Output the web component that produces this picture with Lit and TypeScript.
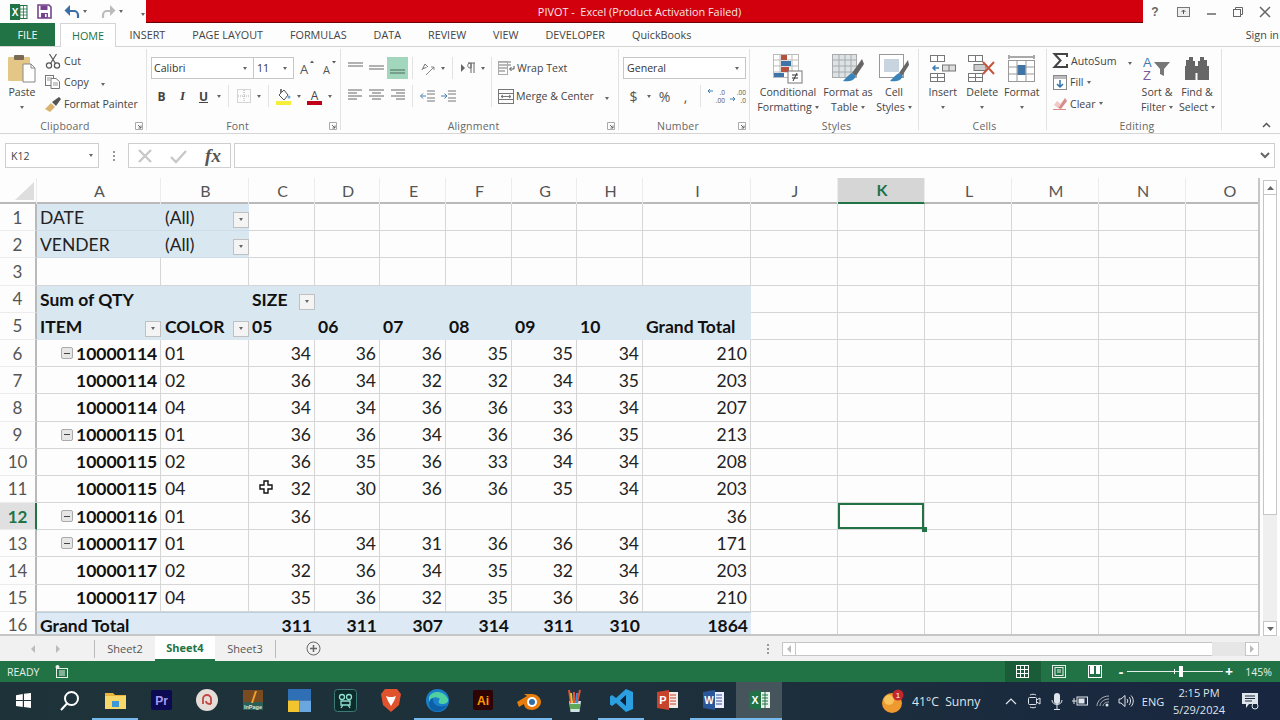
import { LitElement, html, svg, css, nothing } from "lit";
import { customElement } from "lit/decorators.js";

const caret = html`<span class="caret"></span>`;
const launcher = html`<svg class="launch" width="8" height="8" viewBox="0 0 8 8"><path d="M.5 7.5V.5h7v7z" fill="none" stroke="#aaa"/><path d="M3 3l3 3M6 3.5V6H3.5" fill="none" stroke="#666"/></svg>`;
const lines = (rows: number[][], color = "#666") => html`<svg width="17" height="16" viewBox="0 0 17 16">${rows.map(([x1, x2, y]) => svg`<path d="M${x1} ${y}H${x2}" stroke=${color} fill="none"/>`)}</svg>`;

const icons = {
  excelSmall: html`<svg width="18" height="16" viewBox="0 0 18 16"><rect x="6" y="1.5" width="11" height="13" fill="#fff" stroke="#217346"/><path d="M10 2v12M13.5 2v12M7 5h10M7 8h10M7 11h10" stroke="#217346" stroke-width=".8"/><rect x="0" y="0" width="10" height="16" fill="#217346"/><text x="5" y="12" font-size="10" font-weight="700" fill="#fff" text-anchor="middle" font-family="Liberation Sans">X</text></svg>`,
  save: html`<svg width="15" height="15" viewBox="0 0 15 15"><path d="M1 1h11l2 2v11H1z" fill="#fff" stroke="#76448f" stroke-width="1.6"/><rect x="3.5" y="1.5" width="7" height="4.5" fill="#76448f"/><rect x="4" y="9" width="7" height="5" fill="#76448f"/><rect x="8" y="10" width="1.6" height="3" fill="#fff"/></svg>`,
  undo: html`<svg width="16" height="14" viewBox="0 0 16 14"><path d="M5 6h5a4 4 0 0 1 4 4v3" fill="none" stroke="#3c6ea5" stroke-width="2.2"/><path d="M6 0L.5 5.5 6 11z" fill="#3c6ea5"/></svg>`,
  redo: html`<svg width="16" height="14" viewBox="0 0 16 14"><path d="M11 6H7a4 4 0 0 0-4 4v3" fill="none" stroke="#bbb" stroke-width="2.2"/><path d="M10 0l5.500 5.500L10 11z" fill="#bbb"/></svg>`,
  cut: html`<svg width="16" height="16" viewBox="0 0 16 16" fill="none" stroke="#555" stroke-width="1.2"><circle cx="4" cy="12.500" r="2.600"/><circle cx="12" cy="12.500" r="2.600"/><path d="M5.500 10.500L11.500 1M10.500 10.500L4.500 1"/></svg>`,
  copy: html`<svg width="16" height="14" viewBox="0 0 16 14" fill="#fff" stroke="#777"><rect x=".5" y=".5" width="8" height="10"/><path d="M6 3.500h5l3.500 3v7H6z"/><path d="M2 3h5M2 5h3M8 8h5M8 10h5" stroke="#999"/></svg>`,
  painter: html`<svg width="18" height="16" viewBox="0 0 18 16"><path d="M1 13l6-6 4 4-5 5z" fill="#d9b26b"/><path d="M8 6l4 4 5-7-2-2z" fill="#555"/></svg>`,
  paste: html`<svg width="28" height="30" viewBox="0 0 28 30"><rect x="0" y="3" width="22" height="24" rx="1" fill="#e4c787"/><rect x="6" y="1" width="10" height="5" rx="1" fill="#7a6a55"/><path d="M15 10h8l4 4v14H15z" fill="#fff" stroke="#888"/><path d="M23 10v4h4" fill="none" stroke="#888"/></svg>`,
  grow: html`<svg width="16" height="18" viewBox="0 0 16 18"><text x="0" y="15" font-size="13" fill="#555" font-family="Open Sans">A</text><path d="M10 4l2-2.500L14 4z" fill="#555"/></svg>`,
  shrink: html`<svg width="16" height="18" viewBox="0 0 16 18"><text x="1" y="15" font-size="11" fill="#555" font-family="Open Sans">A</text><path d="M10 2l2 2.500L14 2z" fill="#555"/></svg>`,
  borders: html`<svg width="14" height="14" viewBox="0 0 14 14" fill="none" stroke="#aaa" stroke-dasharray="1 1"><rect x=".5" y=".5" width="13" height="13"/><path d="M7 1v12M1 7h12"/></svg>`,
  fill: html`<svg width="15" height="17" viewBox="0 0 15 17"><path d="M3 7l5-5 4 5-4 5z" fill="#fff" stroke="#555"/><path d="M4 1h2v4H4z" fill="#777"/><circle cx="13" cy="9" r="1.500" fill="#6aa9d8"/><rect y="13" width="15" height="4" fill="#f5ee3d"/></svg>`,
  fontColor: html`<svg width="15" height="18" viewBox="0 0 15 18"><text x="7.500" y="12.500" font-size="12" text-anchor="middle" fill="#444" font-family="Open Sans">A</text><rect y="14" width="15" height="4" fill="#c00018"/></svg>`,
  orient: html`<svg width="15" height="15" viewBox="0 0 15 15" fill="none" stroke="#666"><path d="M2 9l3-6 3 3M3 7.500l3.500-1" stroke-width=".9"/><path d="M6 14L14 6" stroke="#888"/><path d="M11 6h3v3" stroke="#888"/></svg>`,
  rtl: html`<svg width="16" height="12" viewBox="0 0 16 12"><path d="M1 2l4 4-4 4z" fill="#666"/><path d="M8 1h7M10 1c-3 0-3 5 0 5h1V1M11 1v10M14 1v10" fill="none" stroke="#666"/></svg>`,
  outdent: html`<svg width="16" height="12" viewBox="0 0 16 12" fill="none"><path d="M7 1h8M7 4h8M7 8h8M7 11h8" stroke="#777"/><path d="M6 6H1M3 3.500L.5 6 3 8.500" stroke="#3e7cb1"/></svg>`,
  indent: html`<svg width="16" height="12" viewBox="0 0 16 12" fill="none"><path d="M7 1h8M7 4h8M7 8h8M7 11h8" stroke="#777"/><path d="M0 6h5M3.500 3.500L6 6 3.500 8.500" stroke="#3e7cb1"/></svg>`,
  wrap: html`<svg width="17" height="14" viewBox="0 0 17 14" fill="none" stroke="#777"><path d="M1 1h12M1 4h12M1 7h9M1 10h6"/><rect x=".5" y=".5" width="9" height="13" stroke="#aaa"/><path d="M16 5v3h-4M13.500 6l-2 2 2 2" stroke="#555"/></svg>`,
  merge: html`<svg width="16" height="15" viewBox="0 0 16 15" fill="none" stroke="#777"><rect x=".5" y=".5" width="15" height="14"/><path d="M1 4.500h14M1 10.500h14M3 7.500h10M5 6L3 7.500 5 9M11 6l2 1.500L11 9"/></svg>`,
  decInc: html`<svg width="18" height="16" viewBox="0 0 18 16"><text x="18" y="7" font-size="6.500" text-anchor="end" fill="#555" font-family="Open Sans">.0</text><text x="18" y="14.500" font-size="6.500" text-anchor="end" fill="#555" font-family="Open Sans">.00</text><path d="M6 3H1M3 1L1 3l2 2" stroke="#3e7cb1" fill="none"/></svg>`,
  decDec: html`<svg width="18" height="16" viewBox="0 0 18 16"><text x="18" y="7" font-size="6.500" text-anchor="end" fill="#555" font-family="Open Sans">.00</text><text x="18" y="14.500" font-size="6.500" text-anchor="end" fill="#555" font-family="Open Sans">.0</text><path d="M2 11h5M5 9l2 2-2 2" stroke="#3e7cb1" fill="none"/></svg>`,
  conditional: html`<svg width="30" height="30" viewBox="0 0 30 30"><g fill="#fff" stroke="#bbb"><rect x=".5" y=".5" width="25" height="23"/></g><path d="M7 1v22M19 1v22M1 6h24M1 12h24M1 18h24" stroke="#bbb" fill="none"/><rect x="8" y="1" width="6" height="5" fill="#b5513c"/><rect x="8" y="7" width="10" height="5" fill="#3f74a8"/><rect x="8" y="13" width="8" height="5" fill="#b5513c"/><rect x="1" y="19" width="10" height="4" fill="#3f74a8"/><rect x="15" y="17" width="14" height="12" fill="#fff" stroke="#777"/><path d="M19 21h6M19 24h6M24 19l-4 8" stroke="#333" fill="none"/></svg>`,
  table: html`<svg width="32" height="30" viewBox="0 0 32 30"><rect x=".5" y=".5" width="24" height="23" fill="#dbe3e6" stroke="#aaa"/><path d="M7 1v22M13 1v22M19 1v22M1 6h24M1 12h24M1 18h24" stroke="#aaa" fill="none"/><path d="M30 5l-10 14 4 3 8-12z" fill="#666"/><path d="M20 19c-4 2-6 5-9 8 5 1 11 0 13-5z" fill="#3b82b8"/></svg>`,
  cell: html`<svg width="30" height="30" viewBox="0 0 30 30"><rect x=".5" y=".5" width="24" height="23" fill="#fff" stroke="#999"/><rect x="5" y="5" width="15" height="13" fill="#c8d4e0"/><path d="M29 6l-9 13 3 3 7-11z" fill="#666"/><path d="M20 19c-4 2-6 5-9 8 5 1 11 0 13-5z" fill="#3b82b8"/></svg>`,
  insert: html`<svg width="26" height="27" viewBox="0 0 26 27" fill="#fff" stroke="#777"><rect x=".5" y=".5" width="14" height="6"/><path d="M7.500 1v5"/><rect x="12.500" y="10" width="13" height="6" fill="#ddd"/><path d="M19 10v6"/><rect x=".5" y="18.500" width="14" height="8"/><path d="M7.500 19v7M1 22.500h13"/><path d="M9 13H3M5.500 10.500L3 13l2.500 2.500" stroke="#3e7cb1" stroke-width="1.500" fill="none"/></svg>`,
  del: html`<svg width="28" height="27" viewBox="0 0 28 27" fill="#fff" stroke="#777"><rect x=".5" y=".5" width="14" height="6"/><path d="M7.500 1v5"/><rect x="6" y="9.500" width="12" height="6" fill="#ccc"/><rect x=".5" y="18.500" width="14" height="8"/><path d="M7.500 19v7M1 22.500h13"/><path d="M15 7l11 12M26 7L15 19" stroke="#c8553d" stroke-width="2" fill="none"/></svg>`,
  format: html`<svg width="28" height="30" viewBox="0 0 28 30" fill="none" stroke="#999"><path d="M1 1v4M26 1v4M2 3h23" stroke="#555"/><rect x=".5" y="6.500" width="26" height="21" fill="#fff"/><path d="M9 7v20M18 7v20M1 13h25M1 20h25"/><rect x="9.500" y="11" width="8" height="10" fill="#3f74a8" stroke="none"/></svg>`,
  sigma: html`<svg width="15" height="15" viewBox="0 0 15 15"><path d="M14 4V1H1.500l6 6.500L1.500 14H14v-3" fill="none" stroke="#444" stroke-width="2"/></svg>`,
  fillDown: html`<svg width="14" height="15" viewBox="0 0 14 15"><rect x=".5" y=".5" width="13" height="14" fill="#fff" stroke="#888"/><rect x="1" y="1" width="12" height="3" fill="#bbb"/><path d="M7 5v7M4 9l3 3 3-3" fill="none" stroke="#2f72a8" stroke-width="1.500"/></svg>`,
  eraser: html`<svg width="14" height="13" viewBox="0 0 14 13"><path d="M5 11L12 1l2 3-6 8z" fill="#d98c8c"/><path d="M5 11L1 8l3-4 4 3z" fill="#f0c8c8"/><path d="M0 12.500h13" stroke="#d98c8c"/></svg>`,
  sort: html`<svg width="28" height="28" viewBox="0 0 28 28"><text x="0" y="12" font-size="13" fill="#3e7cb1" font-family="Liberation Sans">A</text><text x="0" y="25" font-size="13" fill="#7a5a9a" font-family="Liberation Sans">Z</text><path d="M11 7h16l-6 7v7l-4-2v-5z" fill="#777"/></svg>`,
  find: html`<svg width="26" height="25" viewBox="0 0 26 25" fill="#666"><path d="M5 1h4v4h2v5H2V4h3zM16 1h4v3h3v6h-9V5h2z"/><path d="M1 10h10.500v14H1zM13.500 10H25v14H13.500zM11 10h3v7h-3z"/></svg>`,
  cursor: html`<svg class="cursor" width="14" height="14" viewBox="0 0 14 14"><path d="M5 1h4v4h4v4H9v4H5V9H1V5h4z" fill="#fff" stroke="#111" stroke-width="1.400"/></svg>`,
  grid: html`<svg width="14" height="14" viewBox="0 0 14 14" fill="none" stroke="#fff"><rect x=".5" y=".5" width="12" height="12"/><path d="M4.500 1v11M8.500 1v11M1 4.500h11M1 8.500h11"/></svg>`,
  page: html`<svg width="14" height="14" viewBox="0 0 14 14" fill="none" stroke="#e6efe9"><rect x=".5" y=".5" width="13" height="12"/><rect x="3" y="2.500" width="8" height="8"/><path d="M5 5h4M5 7h4"/></svg>`,
  breakView: html`<svg width="14" height="14" viewBox="0 0 14 14"><rect x=".5" y=".5" width="13" height="12" fill="none" stroke="#fff"/><rect x="2" y="1" width="4" height="8" fill="#fff"/><rect x="8" y="1" width="4" height="8" fill="#fff"/></svg>`,
  macro: html`<svg width="13" height="13" viewBox="0 0 13 13" fill="none" stroke="#e6efe9"><rect x="1.500" y="3.500" width="11" height="9"/><path d="M4 6h6M4 8h6M4 10h6"/><circle cx="2.500" cy="2" r="2" fill="#e6efe9" stroke="none"/></svg>`,
};

const taskIcons = [
  html`<svg width="15" height="15" viewBox="0 0 15 15" fill="#fff"><path d="M0 2.200L6.800 1v6H0zM8 .8L15 0v7H8zM0 8h6.800v6L0 13zM8 8h7v7l-7-1z"/></svg>`,
  html`<svg width="21" height="21" viewBox="0 0 21 21" fill="none" stroke="#fff" stroke-width="2"><circle cx="12.500" cy="8.500" r="6.500"/><path d="M8 13.500L2 20"/></svg>`,
  html`<svg width="21" height="18" viewBox="0 0 21 18"><path d="M0 2h8l2 2h11v14H0z" fill="#e8b53a"/><rect y="5" width="21" height="13" fill="#f6d769"/><rect x="7" y="10" width="7" height="6" fill="#3b9ad6"/></svg>`,
  html`<svg width="21" height="20" viewBox="0 0 21 20"><rect width="21" height="20" rx="2" fill="#0b0a52"/><text x="10.500" y="14.500" font-size="12" font-weight="700" text-anchor="middle" fill="#a89bf5" font-family="Liberation Sans">Pr</text></svg>`,
  html`<svg width="22" height="22" viewBox="0 0 22 22"><circle cx="11" cy="11" r="11" fill="#e5ddd8"/><path d="M7 15V10a4 4 0 0 1 8 0v5M15 15c-3 0-5-1-5-3" fill="none" stroke="#c2473f" stroke-width="1.800"/></svg>`,
  html`<svg width="20" height="20" viewBox="0 0 20 20"><rect width="20" height="20" fill="#7a4a20"/><rect y="12" width="20" height="8" fill="#2c5f58"/><path d="M12 1L8 13h2l4-12z" fill="#f0a12c"/><text x="10" y="18.500" font-size="5.500" font-weight="700" text-anchor="middle" fill="#d6e8dc" font-family="Liberation Sans">InPage</text></svg>`,
  html`<svg width="23" height="23" viewBox="0 0 23 23"><rect width="23" height="11.500" fill="#2f6fb5"/><rect y="11.500" width="11.500" height="11.500" fill="#f2c530"/><rect x="11.500" y="11.500" width="11.500" height="11.500" fill="#6aa6df"/></svg>`,
  html`<svg width="23" height="23" viewBox="0 0 23 23"><rect x=".5" y=".5" width="22" height="22" rx="3" fill="#0d2b2b" stroke="#3d7a78"/><g fill="none" stroke="#8fe0d0" stroke-width="1.300"><circle cx="8" cy="8" r="2.500"/><circle cx="15" cy="8" r="2.500"/><path d="M7 12h9v4H7zM9 16l-2 3M14 16l2 3"/></g></svg>`,
  html`<svg width="20" height="23" viewBox="0 0 20 23"><path d="M4 0h12l4 5-2 11-8 7-8-7L0 5z" fill="#e0532c"/><path d="M5 7l3 1h4l3-1-2 5-3 5-3-5z" fill="#fff"/></svg>`,
  html`<svg width="23" height="23" viewBox="0 0 23 23"><circle cx="11.500" cy="11.500" r="11.500" fill="#1a7fc9"/><path d="M3 8c3-7 15-7 19 2 1 4-3 5-6 5-4 0-4-3-2-5C10 7 5 8 3 14z" fill="#4fd0a0"/><path d="M6 21c-5-5-3-11 1-12-1 6 5 11 14 7-3 6-10 8-15 5z" fill="#0d5fa8"/></svg>`,
  html`<svg width="20" height="20" viewBox="0 0 20 20"><rect width="20" height="20" rx="2" fill="#2e0303"/><text x="10" y="14.500" font-size="12" font-weight="700" text-anchor="middle" fill="#ff9a00" font-family="Liberation Sans">Ai</text></svg>`,
  html`<svg width="24" height="19" viewBox="0 0 24 19"><path d="M0 11l10-6-3-2h8c5 0 9 4 9 8s-4 8-9 8-8-3-8-6l-5 3z" fill="#e87d0d"/><circle cx="15" cy="11" r="5" fill="#fff"/><circle cx="15" cy="11" r="3" fill="#2f6ea8"/></svg>`,
  html`<svg width="16" height="23" viewBox="0 0 16 23"><path d="M2 12h12l-1.500 11h-9z" fill="#cfe3e4"/><path d="M4 14L2 1M7 14L7 3M10 14l3-13" fill="none" stroke="#e0503c" stroke-width="2"/><path d="M5 14L4 4" stroke="#efc02c" stroke-width="2"/><path d="M9 14l1-10" stroke="#3c8fd6" stroke-width="2"/><rect x="3" y="15" width="10" height="5" fill="#5ea85a"/></svg>`,
  html`<svg width="23" height="23" viewBox="0 0 23 23"><path d="M16 0l7 3v17l-7 3-10-9-4 3-2-1.500v-8L2 6l4 3z" fill="#2c9fe0"/><path d="M16 6l-6 5.500 6 5.500z" fill="#0d2233"/></svg>`,
  html`<svg width="21" height="20" viewBox="0 0 21 20"><rect x="10" y="2" width="11" height="16" fill="#f4e9e4"/><path d="M13 5h6M13 8h6M13 11h6M13 14h6" stroke="#c8432b"/><path d="M0 2l12-2v20L0 18z" fill="#c8432b"/><text x="6" y="14" font-size="11" font-weight="700" text-anchor="middle" fill="#fff" font-family="Liberation Sans">P</text></svg>`,
  html`<svg width="21" height="20" viewBox="0 0 21 20"><rect x="10" y="2" width="11" height="16" fill="#eef"/><path d="M13 5h6M13 8h6M13 11h6M13 14h6" stroke="#2b579a"/><path d="M0 2l12-2v20L0 18z" fill="#2b579a"/><text x="6" y="14" font-size="10" font-weight="700" text-anchor="middle" fill="#fff" font-family="Liberation Sans">W</text></svg>`,
  html`<svg width="21" height="20" viewBox="0 0 21 20"><rect x="10" y="2" width="11" height="16" fill="#e8f2ea"/><path d="M13 5h6M13 8h6M13 11h6M13 14h6M16 2v16" stroke="#217346"/><path d="M0 2l12-2v20L0 18z" fill="#217346"/><text x="6" y="14" font-size="10.500" font-weight="700" text-anchor="middle" fill="#fff" font-family="Liberation Sans">X</text></svg>`,
];
// which taskbar slots have the running underline
const running = [2, 9, 10, 11, 13, 15, 16];

const letters = "ABCDEFGHIJKLMNO".split("");
type Cell = { t?: string; cls?: string; filter?: boolean; minus?: boolean };

const pivot: [string, string, boolean, (number | null)[], number][] = [
  ["10000114", "01", true, [34, 36, 36, 35, 35, 34], 210],
  ["10000114", "02", false, [36, 34, 32, 32, 34, 35], 203],
  ["10000114", "04", false, [34, 34, 36, 36, 33, 34], 207],
  ["10000115", "01", true, [36, 36, 34, 36, 36, 35], 213],
  ["10000115", "02", false, [36, 35, 36, 33, 34, 34], 208],
  ["10000115", "04", false, [32, 30, 36, 36, 35, 34], 203],
  ["10000116", "01", true, [36, null, null, null, null, null], 36],
  ["10000117", "01", true, [null, 34, 31, 36, 36, 34], 171],
  ["10000117", "02", false, [32, 36, 34, 35, 32, 34], 203],
  ["10000117", "04", false, [35, 36, 32, 35, 36, 36], 210],
];

function buildRows(): Cell[][] {
  const blank = () => letters.map(() => ({} as Cell));
  const rows: Cell[][] = [];
  for (const label of ["DATE", "VENDER"]) {
    const r = blank();
    r[0] = { t: label, cls: "page" };
    r[1] = { t: "(All)", cls: "page wide", filter: true };
    rows.push(r);
  }
  rows.push(blank());
  const r4 = blank();
  for (let i = 0; i < 9; i++) r4[i] = { cls: "head" };
  r4[0] = { t: "Sum of QTY", cls: "head" };
  r4[2] = { t: "SIZE", cls: "head", filter: true };
  rows.push(r4);
  const r5 = blank();
  for (let i = 0; i < 9; i++) r5[i] = { cls: "head" };
  r5[0] = { t: "ITEM", cls: "head", filter: true };
  r5[1] = { t: "COLOR", cls: "head wide", filter: true };
  ["05", "06", "07", "08", "09", "10"].forEach((t, i) => (r5[i + 2] = { t, cls: "head" }));
  r5[8] = { t: "Grand Total", cls: "head" };
  rows.push(r5);
  for (const [item, color, minus, nums, total] of pivot) {
    const r = blank();
    r[0] = { t: item, cls: "item", minus };
    r[1] = { t: color, cls: "wide" };
    nums.forEach((n, i) => (r[i + 2] = { t: n === null ? "" : String(n), cls: "num" }));
    r[8] = { t: String(total), cls: "num" };
    rows.push(r);
  }
  rows[11][10] = { cls: "sel" };
  const tot = blank();
  for (let i = 0; i < 9; i++) tot[i] = { cls: "total" };
  tot[0] = { t: "Grand Total", cls: "total" };
  [311, 311, 307, 314, 311, 310].forEach((n, i) => (tot[i + 2] = { t: String(n), cls: "total num" }));
  tot[8] = { t: "1864", cls: "total num" };
  rows.push(tot);
  return rows;
}

@customElement("app-root")
export class AppRoot extends LitElement {
  static styles = css`
    :host {
      display: block;
      width: 1280px;
      height: 720px;
      overflow: hidden;
      background: #fdfdfd;
      font-family: "Open Sans", "Noto Sans", sans-serif;
      font-size: 10.6px;
      color: #444;
    }
    * { box-sizing: border-box; }
    svg { display: block; flex: none; overflow: visible; }
    .caret {
      display: inline-block;
      flex: none;
      width: 0;
      height: 0;
      border: 2.5px solid transparent;
      border-top: 3px solid #666;
      border-bottom: 0;
    }

    .titlebar { height: 23px; display: flex; }
    .qat { width: 146px; display: flex; align-items: center; padding-left: 10px; flex: none; }
    .qat .save { margin-left: 9px; }
    .qat .undo { margin-left: 12px; }
    .qat .caret { margin: 0 0 0 3px; }
    .qat .redo { margin-left: 13px; }
    .qat .more { margin-left: 15px; }
    .redline {
      width: 997px;
      height: 23px;
      background: #d2000c;
      border-bottom: 1px solid #6d0006;
      color: #f6e8e8;
      font-size: 10.9px;
      display: flex;
      align-items: center;
      justify-content: center;
      white-space: pre;
      padding-right: 10px;
    }
    .winbtns { flex: 1; display: flex; align-items: center; padding-left: 7px; gap: 17px; }

    .tabs { height: 24px; display: flex; align-items: stretch; border-bottom: 1px solid #d4d4d4; font-size: 10.8px; }
    .file { width: 55px; background: #217346; color: #f1f7f3; display: flex; align-items: center; justify-content: center; margin-right: 5px; }
    .tab { padding: 0 13.5px; display: flex; align-items: center; white-space: nowrap; }
    .tab.on { color: #217346; background: #fff; border: 1px solid #d4d4d4; border-bottom: 0; padding: 0 11px; height: 24px; }
    .signin { margin-left: auto; display: flex; align-items: center; padding-right: 1px; white-space: nowrap; }

    .ribbon { height: 87px; display: flex; border-bottom: 1px solid #d6d6d6; padding-top: 2px; }
    .group { display: flex; flex-direction: column; flex: none; border-right: 1px solid #e2e2e2; margin-bottom: 3px; }
    .gbody { flex: 1; display: flex; min-height: 0; }
    .glabel { height: 8px; display: flex; align-items: center; font-size: 10.5px; color: #666; }
    .glabel span { flex: 1; text-align: center; letter-spacing: .2px; }
    .launch { margin-right: 3px; margin-left: 5px; }
    .g-clip { width: 147px; }
    .g-font { width: 194px; padding-left: 4px; }
    .g-align { width: 278px; padding-left: 4px; }
    .g-num { width: 131px; padding-left: 4px; }
    .g-styles { width: 169px; padding-left: 5px; }
    .g-cells { width: 128px; padding-left: 4px; }
    .g-edit { width: 175px; padding-left: 6px; }
    .collapse { flex: 1; display: flex; justify-content: flex-end; align-items: flex-end; padding: 0 9px 5px 0; }

    .stack { display: flex; flex-direction: column; padding-top: 8px; gap: 6px; }
    .row { display: flex; align-items: center; height: 22px; flex: none; }
    .t { width: 21px; height: 22px; display: flex; align-items: center; justify-content: center; flex: none; }
    .t.active { background: #a2d6bd; }
    .c { width: 10px; display: flex; justify-content: center; flex: none; }
    .s { width: 1px; height: 22px; background: #e2e2e2; margin: 0 4px; flex: none; }
    .s.tall { height: 50px; margin: 8px 0 0; }
    .bold { font-weight: 700; font-size: 12px; }
    .ital { font-style: italic; font-family: "Liberation Serif", serif; font-size: 13px; font-weight: 700; }
    .und { text-decoration: underline; font-weight: 700; font-size: 12px; }
    .dd { height: 22px; border: 1px solid #c6c6c6; display: flex; align-items: center; padding: 0 6px 0 2px; justify-content: space-between; background: #fff; color: #333; flex: none; }
    .dd-font { width: 103px; }
    .dd-size { width: 40px; border-left: 0; padding-left: 3px; }
    .dd-num { width: 123px; padding-left: 3px; }
    .grow { margin-left: 6px; display: flex; gap: 6px; }

    .big { display: flex; flex-direction: column; align-items: center; flex: none; padding-top: 3px; text-align: center; line-height: 15px; }
    .bigicon { height: 33px; display: flex; align-items: center; justify-content: center; }
    .bigtxt { white-space: nowrap; height: 15px; display: flex; align-items: center; gap: 3px; }
    .w-paste { width: 44px; }
    .w-cf { width: 66px; }
    .w-ft { width: 54px; }
    .w-cs { width: 38px; }
    .w-c { width: 39.5px; }
    .w-s { width: 40px; }
    .w-list { width: 84px; }
    .clip { padding-top: 1px; display: flex; flex-direction: column; }
    .li { height: 21.5px; display: flex; align-items: center; gap: 3px; white-space: nowrap; }
    .li .ic { width: 17px; display: flex; justify-content: center; flex: none; }
    .lcaret { margin-left: 9px; }
    .icon-col { display: flex; align-items: center; gap: 2px; white-space: nowrap; padding-left: 6px; }
    .left-block { width: 146px; }
    .numtxt { font-size: 14px; color: #555; }

    .formula { height: 44px; padding: 9px 5px 10px; display: flex; align-items: stretch; }
    .fbox { border: 1px solid #cfcfcf; background: #fff; display: flex; align-items: center; flex: none; }
    .name { width: 94px; padding: 0 5px; justify-content: space-between; color: #444; }
    .dots { width: 29px; display: flex; flex-direction: column; align-items: center; justify-content: center; gap: 2px; flex: none; }
    .dots i { width: 2px; height: 2px; background: #999; }
    .fx { width: 103px; justify-content: space-around; }
    .input { flex: 1; margin-left: 3px; justify-content: flex-end; padding-right: 4px; }
    .fxt { font-family: "Liberation Serif", serif; font-style: italic; font-size: 19px; font-weight: 700; color: #555; line-height: 1; }

    .sheet { height: 458px; display: flex; position: relative; font-family: Lato, "Open Sans", sans-serif; font-size: 17.5px; color: #222; }
    .gridwrap { width: 1260px; height: 458px; overflow: hidden; border-bottom: 2px solid #c6c6c6; border-right: 2px solid #c6c6c6; flex: none; }
    .cols, .line {
      display: grid;
      grid-template-columns: 37px 124px 88px 66px 65px 66px 66px 65px 66px 108px 87px 87px 87px 87px 87px 87px;
    }
    .cols { height: 26px; border-bottom: 2px solid #b9b9b9; }
    .hc { display: flex; align-items: center; justify-content: center; border-right: 1px solid #ececec; font-size: 16px; color: #555; font-weight: 400; padding: 0 0 2px 2px; }
    .hc.corner { padding: 4px 3px 4px 15px; align-items: stretch; }
    .hc.on { background: #d6d6d6; color: #217346; font-weight: 700; border-bottom: 2px solid #217346; height: 26px; }
    .line { height: 27.2px; }
    .rh { display: flex; align-items: center; justify-content: center; color: #555; font-size: 17px; border-right: 2px solid #b9b9b9; border-bottom: 1px solid #ececec; }
    .rh.on { background: #e0e0e0; color: #217346; font-weight: 700; border-right-color: #217346; }
    .cell { display: flex; align-items: center; border-right: 1px solid #d6d6d6; border-bottom: 1px solid #d6d6d6; padding: 0 3px 0 3px; white-space: nowrap; min-width: 0; }
    .cell.page { background: #d9e7f1; border-right: 0; border-bottom-color: #cfdde8; color: #222; }
    .cell.wide { padding-left: 4px; }
    .cell.head { background: #d9e7f1; border-right: 0; border-bottom: 0; font-weight: 700; color: #111; }
    .cell.item { font-weight: 700; color: #111; padding-left: 24px; }
    .cell.num { justify-content: flex-end; }
    .cell.total { background: #dde9f4; border-right: 0; border-bottom: 0; border-top: 1px solid #b9cfe0; font-weight: 700; color: #111; }
    .sel { box-shadow: inset 0 0 0 2px #217346; position: relative; }
    .sel::after { content: ""; position: absolute; right: -3px; bottom: -3px; width: 5px; height: 5px; background: #217346; z-index: 2; }
    .minus { width: 12px; height: 12px; margin-right: 3px; border: 1px solid #aaa; border-radius: 2px; background: #e6e6e6; display: flex; align-items: center; justify-content: center; flex: none; }
    .minus i { width: 6px; height: 1px; background: #444; }
    .spacer { width: 12px; margin-right: 3px; flex: none; }
    .filter { margin-left: auto; margin-right: -3px; margin-top: 5px; width: 16px; height: 16px; background: #f4f4f4; border: 1px solid #c0c0c0; display: flex; align-items: center; justify-content: center; flex: none; }
    .cursor { position: absolute; left: 259px; top: 302px; }

    .vbar { flex: 1; padding: 2px 3px 0 3px; display: flex; flex-direction: column; }
    .sb { height: 15px; border: 1px solid #c6c6c6; background: #fff; display: flex; align-items: center; justify-content: center; flex: none; }
    .vthumb { height: 320px; border: 1px solid #c6c6c6; border-top: 0; background: #fff; flex: none; }
    .vtrack { flex: 1; background: #efefef; }

    .tabsbar { height: 25px; display: flex; align-items: center; background: #f1f1f1; color: #555; font-size: 11px; }
    .nav { width: 94px; display: flex; justify-content: space-around; padding: 0 24px 0 20px; }
    .tri-l { width: 0; height: 0; border: 4px solid transparent; border-right: 4px solid #bbb; border-left: 0; }
    .tri-r { width: 0; height: 0; border: 4px solid transparent; border-left: 4px solid #bbb; border-right: 0; }
    .vs { width: 1px; height: 18px; background: #bbb; flex: none; }
    .sheet-tab { width: 60px; height: 25px; display: flex; align-items: center; justify-content: center; flex: none; }
    .sheet-tab.on { background: #fff; color: #217346; font-weight: 700; border-bottom: 2px solid #217346; }
    .plus { margin-left: 30px; }
    .hdots { margin-left: auto; width: 29px; }
    .hbar { display: flex; width: 477px; height: 14px; margin-right: 21px; }
    .hb { width: 14px; border: 1px solid #c6c6c6; background: #fff; display: flex; align-items: center; justify-content: center; flex: none; }
    .hthumb { flex: 1; background: #fff; border: 1px solid #c6c6c6; border-left: 0; border-right: 0; }
    .htrack { width: 33px; background: #e6e6e6; flex: none; }

    .status { height: 21px; background: #217346; color: #e6efe9; display: flex; align-items: center; font-size: 10.5px; }
    .ready { width: 55px; padding-left: 7px; flex: none; }
    .views { margin-left: auto; display: flex; align-items: stretch; height: 21px; }
    .view { width: 36px; display: flex; align-items: center; justify-content: center; }
    .view.on { background: #1a5c38; }
    .zoom { display: flex; align-items: center; margin-left: 2px; width: 120px; flex: none; }
    .pm { width: 12px; text-align: center; font-weight: 700; font-size: 14px; color: #fff; flex: none; }
    .slider { flex: 1; height: 1px; background: #e6efe9; position: relative; }
    .thumb { position: absolute; left: 52px; top: -5px; width: 4px; height: 11px; background: #fff; }
    .tick { position: absolute; left: 47px; top: -2px; width: 1px; height: 5px; background: #fff; }
    .pct { width: 45px; text-align: right; padding-right: 8px; flex: none; }

    .taskbar { height: 38px; display: flex; background: linear-gradient(90deg, #1e3339, #1d2f3c 60%, #182640); color: #dfe5ea; }
    .ti { width: 46px; height: 38px; display: flex; align-items: center; justify-content: center; flex: none; border-bottom: 2px solid transparent; }
    .ti.run { border-bottom-color: #76b9ed; }
    .ti.cur { background-color: #46545b; }
    .tray { margin-left: auto; display: flex; align-items: center; font-family: "Open Sans", sans-serif; padding-right: 9px; }
    .weather { display: flex; align-items: center; gap: 8px; width: 117px; flex: none; font-size: 12.2px; }
    .weather span { white-space: pre; }
    .tic { width: 23px; display: flex; justify-content: center; flex: none; }
    .eng { font-size: 11px; width: 32px; text-align: center; flex: none; }
    .clock { width: 60px; text-align: center; font-size: 11px; line-height: 17px; flex: none; white-space: nowrap; }
    .bell { width: 42px; display: flex; justify-content: center; flex: none; }
  `;

  private big(icon: unknown, l1: string, l2: string, w: string, hasCaret = true) {
    return html`<div class="big ${w}">
      <div class="bigicon">${icon}</div>
      <div class="bigtxt">${l1}</div>
      <div class="bigtxt">${l2} ${hasCaret ? caret : nothing}</div>
    </div>`;
  }

  private renderTop() {
    return html`
      <div class="titlebar">
        <div class="qat">
          ${icons.excelSmall}
          <span class="save">${icons.save}</span>
          <span class="undo">${icons.undo}</span><span class="caret"></span>
          <span class="redo">${icons.redo}</span><span class="caret"></span>
          <span class="more"><span class="caret"></span></span>
        </div>
        <div class="redline">PIVOT -  Excel (Product Activation Failed)</div>
        <div class="winbtns">
          <svg width="10" height="15" viewBox="0 0 10 15"><text x="5" y="12" font-size="12" font-weight="700" text-anchor="middle" fill="#666" font-family="Liberation Sans">?</text></svg>
          <svg width="13" height="10" viewBox="0 0 13 10"><rect x=".5" y=".5" width="12" height="9" fill="#eee" stroke="#777"/><path d="M6.500 7V3M4.500 5l2-2 2 2" fill="none" stroke="#555"/></svg>
          <svg width="9" height="10" viewBox="0 0 9 10"><path d="M0 7h9" stroke="#666" stroke-width="1.500"/></svg>
          <svg width="10" height="10" viewBox="0 0 10 10" fill="none" stroke="#666"><rect x=".5" y="2.500" width="7" height="7"/><path d="M2.500 2.500v-2h7v7h-2"/></svg>
          <svg width="10" height="10" viewBox="0 0 10 10" stroke="#666" stroke-width="1.500"><path d="M0 0l10 10M10 0L0 10"/></svg>
        </div>
      </div>
      <div class="tabs">
        <div class="file">FILE</div>
        <div class="tab on">HOME</div>
        ${["INSERT", "PAGE LAYOUT", "FORMULAS", "DATA", "REVIEW", "VIEW", "DEVELOPER", "QuickBooks"].map((t) => html`<div class="tab">${t}</div>`)}
        <div class="signin">Sign in</div>
      </div>
    `;
  }

  private renderRibbon() {
    return html`<div class="ribbon">
      <div class="group g-clip">
        <div class="gbody">
          <div class="big w-paste">
            <div class="bigicon">${icons.paste}</div>
            <div class="bigtxt">Paste</div>
            <div class="bigtxt">${caret}</div>
          </div>
          <div class="clip">
            <div class="li"><span class="ic">${icons.cut}</span>Cut</div>
            <div class="li"><span class="ic">${icons.copy}</span>Copy<span class="lcaret">${caret}</span></div>
            <div class="li"><span class="ic">${icons.painter}</span>Format Painter</div>
          </div>
        </div>
        <div class="glabel"><span>Clipboard</span>${launcher}</div>
      </div>

      <div class="group g-font">
        <div class="gbody">
          <div class="stack">
            <div class="row">
              <div class="dd dd-font">Calibri ${caret}</div>
              <div class="dd dd-size">11 ${caret}</div>
              <div class="grow">${icons.grow}${icons.shrink}</div>
            </div>
            <div class="row">
              <div class="t bold">B</div><div class="t ital">I</div><div class="t und">U</div><div class="c">${caret}</div><div class="s"></div>
              <div class="t">${icons.borders}</div><div class="c">${caret}</div><div class="s"></div>
              <div class="t">${icons.fill}</div><div class="c">${caret}</div>
              <div class="t">${icons.fontColor}</div><div class="c">${caret}</div>
            </div>
          </div>
        </div>
        <div class="glabel"><span>Font</span>${launcher}</div>
      </div>

      <div class="group g-align">
        <div class="gbody">
          <div class="stack left-block">
            <div class="row">
              <div class="t">${lines([[1, 16, 3], [1, 16, 6]])}</div>
              <div class="t">${lines([[1, 16, 6], [1, 16, 9]])}</div>
              <div class="t active">${lines([[1, 16, 10], [1, 16, 13]], "#4a6a5a")}</div>
              <div class="s"></div>
              <div class="t">${icons.orient}</div><div class="c">${caret}</div><div class="s"></div>
              <div class="t">${icons.rtl}</div><div class="c">${caret}</div>
            </div>
            <div class="row">
              <div class="t">${lines([[1, 15, 2], [1, 10, 5], [1, 15, 8], [1, 10, 11]])}</div>
              <div class="t">${lines([[1, 16, 2], [4, 13, 5], [1, 16, 8], [4, 13, 11]])}</div>
              <div class="t">${lines([[2, 16, 2], [7, 16, 5], [2, 16, 8], [7, 16, 11]])}</div>
              <div class="s"></div>
              <div class="t">${icons.outdent}</div><div class="t">${icons.indent}</div>
            </div>
          </div>
          <div class="s tall"></div>
          <div class="stack">
            <div class="row"><div class="icon-col">${icons.wrap}Wrap Text</div></div>
            <div class="row"><div class="icon-col">${icons.merge}Merge &amp; Center <span class="lcaret">${caret}</span></div></div>
          </div>
        </div>
        <div class="glabel"><span>Alignment</span>${launcher}</div>
      </div>

      <div class="group g-num">
        <div class="gbody">
          <div class="stack">
            <div class="row"><div class="dd dd-num">General ${caret}</div></div>
            <div class="row">
              <div class="t numtxt">$</div><div class="c">${caret}</div>
              <div class="t numtxt">%</div><div class="t numtxt">,</div><div class="s"></div>
              <div class="t">${icons.decInc}</div><div class="t">${icons.decDec}</div>
            </div>
          </div>
        </div>
        <div class="glabel"><span>Number</span>${launcher}</div>
      </div>

      <div class="group g-styles">
        <div class="gbody">
          ${this.big(icons.conditional, "Conditional", "Formatting", "w-cf")}
          ${this.big(icons.table, "Format as", "Table", "w-ft")}
          ${this.big(icons.cell, "Cell", "Styles", "w-cs")}
        </div>
        <div class="glabel"><span>Styles</span></div>
      </div>

      <div class="group g-cells">
        <div class="gbody">
          ${this.big(icons.insert, "Insert", "", "w-c")}
          ${this.big(icons.del, "Delete", "", "w-c")}
          ${this.big(icons.format, "Format", "", "w-c")}
        </div>
        <div class="glabel"><span>Cells</span></div>
      </div>

      <div class="group g-edit">
        <div class="gbody">
          <div class="clip w-list">
            <div class="li">${icons.sigma}AutoSum<span class="lcaret">${caret}</span></div>
            <div class="li">${icons.fillDown}Fill ${caret}</div>
            <div class="li">${icons.eraser}Clear ${caret}</div>
          </div>
          ${this.big(icons.sort, "Sort &", "Filter", "w-s")}
          ${this.big(icons.find, "Find &", "Select", "w-s")}
        </div>
        <div class="glabel"><span>Editing</span></div>
      </div>

      <div class="collapse">
        <svg width="9" height="6" viewBox="0 0 9 6"><path d="M1 5l3.500-3.500L8 5" fill="none" stroke="#555" stroke-width="1.500"/></svg>
      </div>
    </div>`;
  }

  private renderFormula() {
    return html`<div class="formula">
      <div class="fbox name">K12 ${caret}</div>
      <div class="dots"><i></i><i></i><i></i></div>
      <div class="fbox fx">
        <svg width="14" height="14" viewBox="0 0 14 14"><path d="M1 1l12 12M13 1L1 13" stroke="#c8c8c8" stroke-width="2.400"/></svg>
        <svg width="17" height="14" viewBox="0 0 17 14"><path d="M1 8l5 5L16 2" fill="none" stroke="#c8c8c8" stroke-width="2.400"/></svg>
        <span class="fxt">fx</span>
      </div>
      <div class="fbox input">
        <svg width="10" height="7" viewBox="0 0 10 7"><path d="M1 1l4 4 4-4" fill="none" stroke="#666" stroke-width="2"/></svg>
      </div>
    </div>`;
  }

  private renderCell(c: Cell) {
    const item = (c.cls ?? "").includes("item");
    return html`<div class="cell ${c.cls ?? ""}">
      ${item ? (c.minus ? html`<span class="minus"><i></i></span>` : html`<span class="spacer"></span>`) : nothing}
      ${c.t ?? ""}
      ${c.filter ? html`<span class="filter">${caret}</span>` : nothing}
    </div>`;
  }

  private renderSheet() {
    const rows = buildRows();
    return html`<div class="sheet">
      <div class="gridwrap">
        <div class="cols">
          <div class="hc corner"><svg width="19" height="18" viewBox="0 0 19 18"><path d="M19 0v18H0z" fill="#dedede"/></svg></div>
          ${letters.map((l) => html`<div class="hc ${l === "K" ? "on" : ""}">${l}</div>`)}
        </div>
        ${rows.map((r, i) => html`<div class="line">
          <div class="rh ${i === 11 ? "on" : ""}">${i + 1}</div>
          ${r.map((c) => this.renderCell(c))}
        </div>`)}
      </div>
      ${icons.cursor}
      <div class="vbar">
        <div class="sb"><svg width="7" height="4" viewBox="0 0 7 4"><path d="M0 4l3.500-4L7 4z" fill="#666"/></svg></div>
        <div class="vthumb"></div>
        <div class="vtrack"></div>
        <div class="sb"><svg width="7" height="4" viewBox="0 0 7 4"><path d="M0 0l3.500 4L7 0z" fill="#666"/></svg></div>
      </div>
    </div>`;
  }

  private renderBottom() {
    return html`
      <div class="tabsbar">
        <div class="nav"><span class="tri-l"></span><span class="tri-r"></span></div>
        <div class="vs"></div>
        <div class="sheet-tab">Sheet2</div>
        <div class="sheet-tab on">Sheet4</div>
        <div class="sheet-tab">Sheet3</div>
        <div class="vs"></div>
        <svg class="plus" width="15" height="15" viewBox="0 0 15 15" fill="none" stroke="#666"><circle cx="7.500" cy="7.500" r="6.500"/><path d="M4 7.500h7M7.500 4v7" stroke-width="1.500"/></svg>
        <div class="dots hdots"><i></i><i></i><i></i></div>
        <div class="hbar">
          <div class="hb"><span class="tri-l"></span></div>
          <div class="hthumb"></div>
          <div class="htrack"></div>
          <div class="hb"><span class="tri-r"></span></div>
        </div>
      </div>
      <div class="status">
        <div class="ready">READY</div>
        ${icons.macro}
        <div class="views">
          <div class="view on">${icons.grid}</div>
          <div class="view">${icons.page}</div>
          <div class="view">${icons.breakView}</div>
        </div>
        <div class="zoom">
          <span class="pm">-</span>
          <div class="slider"><i class="tick"></i><i class="thumb"></i></div>
          <span class="pm">+</span>
        </div>
        <div class="pct">145%</div>
      </div>
      <div class="taskbar">
        ${taskIcons.map((ic, i) => html`<div class="ti ${running.includes(i) ? "run" : ""} ${i === 16 ? "cur" : ""}">${ic}</div>`)}
        <div class="tray">
          <div class="weather">
            <svg width="22" height="24" viewBox="0 0 22 24"><circle cx="10" cy="14" r="10" fill="#ef9a2e"/><circle cx="7" cy="11" r="5" fill="#f7c35a"/><circle cx="16" cy="6" r="5.500" fill="#c4262e"/><text x="16" y="9" font-size="8" text-anchor="middle" fill="#fff" font-family="Liberation Sans">1</text></svg>
            <span>41°C  Sunny</span>
          </div>
          <div class="tic"><svg width="12" height="7" viewBox="0 0 12 7"><path d="M1 6l5-5 5 5" fill="none" stroke="#dfe5ea" stroke-width="1.200"/></svg></div>
          <div class="tic"><svg width="14" height="16" viewBox="0 0 14 16" fill="none" stroke="#dfe5ea"><rect x="1.500" y="4.500" width="8" height="7" rx="1"/><path d="M9.500 7l3.500-2v6l-3.500-2M3 2c2-1 4-1 6 0M3 14c2 1 4 1 6 0"/></svg></div>
          <div class="tic"><svg width="12" height="17" viewBox="0 0 12 17"><rect x="3" y="0" width="6" height="11" rx="3" fill="#dfe5ea"/><path d="M1 7c0 6 10 6 10 0M6 12v4M3 16.500h6" fill="none" stroke="#dfe5ea"/></svg></div>
          <div class="tic"><svg width="16" height="12" viewBox="0 0 16 12"><rect x="5" y="2" width="10.500" height="8" fill="none" stroke="#dfe5ea"/><rect x="6.500" y="3.500" width="6" height="5" fill="#dfe5ea"/><path d="M0 6h5M2 3v6" stroke="#dfe5ea"/></svg></div>
          <div class="tic"><svg width="14" height="12" viewBox="0 0 14 12" fill="none" stroke="#aab2b8"><path d="M1 11C1 6 6 1 13 1M4 11c0-3 3-7 9-7M7 11c0-2 2-4 6-4"/><circle cx="11" cy="10" r="1.500" fill="#dfe5ea" stroke="none"/></svg></div>
          <div class="tic"><svg width="15" height="14" viewBox="0 0 15 14" fill="none" stroke="#dfe5ea"><path d="M1 5v4h2l4 3.500v-11L3 5z"/><path d="M9 5c1 1 1 3 0 4M11 3c2 2 2 6 0 8M13 1.500c3 3 3 8 0 11"/></svg></div>
          <div class="eng">ENG</div>
          <div class="clock">2:15 PM<br />5/29/2024</div>
          <div class="bell"><svg width="17" height="17" viewBox="0 0 17 17"><path d="M0 0h16v11H7l-3 4v-4H0z" fill="#dfe5ea"/><path d="M3 3h10M3 5.500h10M3 8h7" stroke="#1c2a40"/><circle cx="13" cy="13" r="3" fill="none" stroke="#dfe5ea"/></svg></div>
        </div>
      </div>
    `;
  }

  render() {
    return html`${this.renderTop()}${this.renderRibbon()}${this.renderFormula()}${this.renderSheet()}${this.renderBottom()}`;
  }
}
